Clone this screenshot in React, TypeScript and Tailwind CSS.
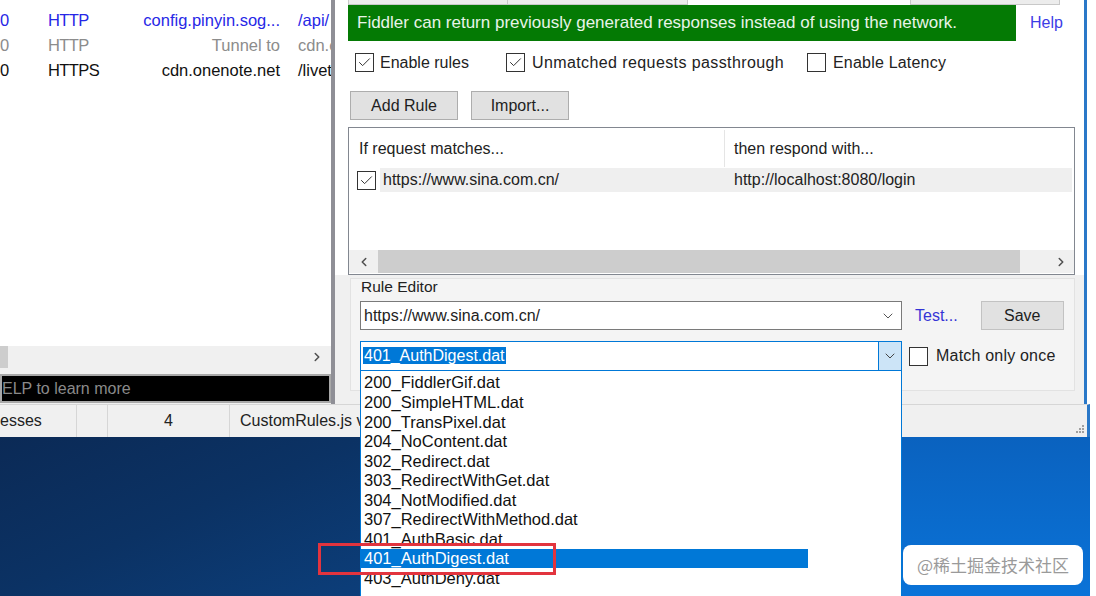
import {Check, ChevronDown, ChevronLeft, ChevronRight} from 'lucide-react';

type Session = {
  tone: string;
  id: string;
  protocol: string;
  host: string;
  url: string;
};

const sessions: Session[] = [
  {tone: 'text-[#2727e6]', id: '0', protocol: 'HTTP', host: 'config.pinyin.sog...', url: '/api/'},
  {tone: 'text-[#8c8c8c]', id: '0', protocol: 'HTTP', host: 'Tunnel to', url: 'cdn.c'},
  {tone: 'text-[#111111]', id: '0', protocol: 'HTTPS', host: 'cdn.onenote.net', url: '/livet'}
];

const responses = [
  '200_FiddlerGif.dat',
  '200_SimpleHTML.dat',
  '200_TransPixel.dat',
  '204_NoContent.dat',
  '302_Redirect.dat',
  '303_RedirectWithGet.dat',
  '304_NotModified.dat',
  '307_RedirectWithMethod.dat',
  '401_AuthBasic.dat',
  '401_AuthDigest.dat',
  '403_AuthDeny.dat'
];

function CheckBox({checked = false}: {checked?: boolean}) {
  return (
    <span className="flex h-[19px] w-[19px] shrink-0 items-center justify-center border border-[#333333] bg-white">
      {checked ? <Check size={15} strokeWidth={1.6} className="text-[#333333]" /> : null}
    </span>
  );
}

function WinButton({label, className}: {label: string; className: string}) {
  return (
    <div
      className={`flex h-[29px] shrink-0 items-center justify-center border border-[#adadad] bg-[#e1e1e1] text-[16px] text-[#1e1e1e] ${className}`}
    >
      {label}
    </div>
  );
}

function SessionPane() {
  return (
    <div className="flex h-full w-[331px] shrink-0 flex-col bg-white">
      <div className="flex-1 overflow-hidden pt-[8px] text-[16.5px]">
        {sessions.map((s) => (
          <div key={s.host} className={`flex h-[25px] items-center whitespace-nowrap ${s.tone}`}>
            <span className="w-[48px] shrink-0">{s.id}</span>
            <span className="w-[62px] shrink-0 tracking-[-0.6px]">{s.protocol}</span>
            <span className="w-[170px] shrink-0 text-right">{s.host}</span>
            <span className="min-w-0 flex-1 overflow-hidden pl-[18px]">{s.url}</span>
          </div>
        ))}
      </div>

      <div className="flex h-[22px] shrink-0 items-center bg-[#f0f0f0]">
        <div className="h-full w-[8px] bg-[#cdcdcd]" />
        <div className="flex-1" />
        <ChevronRight size={14} strokeWidth={2.6} className="mr-[7px] text-[#505050]" />
      </div>
      <div className="h-[6px] shrink-0 bg-[#f0f0f0]" />
      <div className="flex h-[29px] shrink-0 items-center border-2 border-[#a8a8a8] bg-black text-[16px] text-[#8a8a8a]">
        ELP to learn more
      </div>
      <div className="h-[1px] shrink-0 bg-[#f0f0f0]" />
    </div>
  );
}

function StatusBar() {
  return (
    <div className="flex h-[33px] w-[1090px] shrink-0 items-center overflow-hidden border-t border-r-[3px] border-t-[#d6d6d6] border-r-[#2a78c8] bg-[#f0f0f0] text-[16px] text-[#222222]">
      <div className="flex h-full w-[77px] shrink-0 items-center border-r border-[#d6d6d6]">esses</div>
      <div className="h-full w-[31px] shrink-0 border-r border-[#d6d6d6]" />
      <div className="flex h-full w-[122px] shrink-0 items-center justify-center border-r border-[#d6d6d6]">4</div>
      <div className="shrink-0 whitespace-nowrap pl-[10px]">CustomRules.js v</div>
      <div className="flex-1" />
      <svg width="9" height="9" viewBox="0 0 9 9" className="mr-[3px] mt-[14px] shrink-0 text-[#a0a0a0]">
        <rect x="7" y="1" width="2" height="2" fill="currentColor" />
        <rect x="4" y="4" width="2" height="2" fill="currentColor" />
        <rect x="7" y="4" width="2" height="2" fill="currentColor" />
        <rect x="1" y="7" width="2" height="2" fill="currentColor" />
        <rect x="4" y="7" width="2" height="2" fill="currentColor" />
        <rect x="7" y="7" width="2" height="2" fill="currentColor" />
      </svg>
    </div>
  );
}

function RulesList() {
  return (
    <div className="ml-[13px] flex h-[148px] w-[727px] flex-col border border-[#828790] bg-white pt-[2px] text-[16px] text-[#222222]">
      <div className="flex h-[37px] shrink-0">
        <div className="flex w-[376px] items-center border-r border-[#e5e5e5] pl-[10px]">If request matches...</div>
        <div className="flex items-center pl-[9px]">then respond with...</div>
      </div>
      <div className="mt-[1px] flex h-[24px] shrink-0 items-center pl-[8px]">
        <CheckBox checked />
        <div className="ml-[4px] mr-[2px] flex h-full flex-1 items-center bg-[#efefef]">
          <span className="w-[354px] shrink-0 pl-[3px]">https://www.sina.com.cn/</span>
          <span>http://localhost:8080/login</span>
        </div>
      </div>
      <div className="flex-1" />
      <div className="flex h-[23px] shrink-0 items-center bg-[#f0f0f0]">
        <div className="flex w-[29px] justify-center">
          <ChevronLeft size={14} strokeWidth={2.6} className="text-[#505050]" />
        </div>
        <div className="h-full w-[642px] bg-[#cdcdcd]" />
        <div className="flex flex-1 justify-end pr-[6px]">
          <ChevronRight size={14} strokeWidth={2.6} className="text-[#505050]" />
        </div>
      </div>
      <div className="h-[1px] shrink-0 bg-white" />
    </div>
  );
}

function RuleEditor() {
  return (
    <div className="ml-[15px] flex h-[113px] w-[725px] flex-col border border-[#e2e2e2] bg-[#f4f4f4] pl-[9px] text-[16px] text-[#222222]">
      <div className="flex h-[16px] items-center pl-[1px] text-[15.5px]">Rule Editor</div>

      <div className="mt-[6px] flex items-center">
        <div className="flex h-[29px] w-[542px] shrink-0 items-center border border-[#7a7a7a] bg-white pl-[3px]">
          <span className="flex-1">https://www.sina.com.cn/</span>
          <ChevronDown size={16} strokeWidth={1.5} className="mr-[5px] text-[#555555]" />
        </div>
        <span className="ml-[13px] text-[#3434d6]">Test...</span>
        <WinButton label="Save" className="ml-[23px] w-[83px] border-[#c2c2c2]" />
      </div>

      <div className="mt-[11px] flex items-center">
        <div className="flex h-[30px] w-[542px] shrink-0 items-center border border-[#0078d7] bg-white pl-[2px]">
          <span className="flex-1">
            <span className="bg-[#0078d7] px-[1px] text-white">401_AuthDigest.dat</span>
          </span>
          <div className="flex h-full w-[23px] items-center justify-center border-l border-[#0078d7] bg-[#cce4f7]">
            <ChevronDown size={16} strokeWidth={1.5} className="text-[#444444]" />
          </div>
        </div>
        <span className="ml-[7px]">
          <CheckBox />
        </span>
        <span className="ml-[8px] tracking-[0.2px]">Match only once</span>
      </div>
    </div>
  );
}

function AutoResponder() {
  return (
    <div className="flex h-full w-[752px] shrink-0 flex-col border-r-[3px] border-[#2a78c8] bg-white">
      <div className="flex h-[5px] shrink-0">
        <div className="ml-[13px] w-[160px] border-x border-b border-[#c8c8c8] bg-[#ececec]" />
        <div className="w-[180px] border-r border-b border-[#c8c8c8] bg-[#ececec]" />
        <div className="w-[222px]" />
        <div className="w-[150px] border-x border-b border-[#c8c8c8] bg-[#ececec]" />
      </div>

      <div className="flex h-[36px] shrink-0 items-center">
        <div className="ml-[13px] flex h-full w-[668px] shrink-0 items-center whitespace-nowrap bg-[#047a04] pl-[9px] text-[17px] text-[#e8f4e8]">
          Fiddler can return previously generated responses instead of using the network.
        </div>
        <span className="ml-[14px] text-[16px] text-[#3c3ce6]">Help</span>
      </div>

      <div className="mt-[12px] flex h-[19px] shrink-0 items-center text-[16px] text-[#222222]">
        <span className="ml-[20px]">
          <CheckBox checked />
        </span>
        <span className="ml-[6px] w-[126px] shrink-0">Enable rules</span>
        <CheckBox checked />
        <span className="ml-[7px] w-[275px] shrink-0 tracking-[0.4px]">Unmatched requests passthrough</span>
        <CheckBox />
        <span className="ml-[7px] tracking-[0.2px]">Enable Latency</span>
      </div>

      <div className="mt-[19px] flex shrink-0">
        <WinButton label="Add Rule" className="ml-[15px] w-[108px]" />
        <WinButton label="Import..." className="ml-[13px] w-[98px]" />
      </div>

      <div className="mt-[7px] shrink-0">
        <RulesList />
      </div>

      <div className="flex flex-1 flex-col bg-[#f0f0f0] pt-[3px]">
        <RuleEditor />
      </div>
    </div>
  );
}

export default function App() {
  return (
    <div className="relative h-[596px] w-[1096px] overflow-hidden bg-white font-['Liberation_Sans',Arial,sans-serif]">
      <div className="flex h-[404px]">
        <SessionPane />
        <div className="h-full w-[4px] shrink-0 bg-[#8f8f96]" />
        <AutoResponder />
        <div className="flex-1 bg-white" />
      </div>

      <StatusBar />

      <div className="flex h-[159px]">
        <div className="w-[360px] shrink-0 bg-gradient-to-br from-[#0b2a56] via-[#0b3264] to-[#0c3e7a]" />
        <div className="w-[542px] shrink-0 bg-white" />
        <div className="w-[188px] shrink-0 bg-gradient-to-b from-[#0a62bf] to-[#0a73d8]" />
        <div className="flex-1 bg-white" />
      </div>

      {/* open drop-down of the response combo */}
      <div className="absolute left-[360px] top-[371px] h-[225px] w-[542px] border-x border-[#0078d7] bg-white pt-[2px] text-[16.5px] text-[#111111]">
        {responses.map((name) => {
          const selected = name === '401_AuthDigest.dat';
          return (
            <div key={name} className="flex h-[19.55px] items-center">
              <div
                className={`flex h-full items-center pl-[3px] ${
                  selected ? 'w-[447px] bg-[#0078d7] text-white' : ''
                }`}
              >
                {name}
              </div>
            </div>
          );
        })}
      </div>

      {/* annotation box */}
      <div className="absolute left-[318px] top-[543px] h-[32px] w-[238px] border-[3px] border-[#e2343e]" />

      <div className="absolute left-[903px] top-[545px] flex h-[40px] w-[180px] items-center justify-center rounded-[8px] bg-white font-['Noto_Sans_CJK_SC',sans-serif] text-[17px] text-[#9a9a9a]">
        @稀土掘金技术社区
      </div>
    </div>
  );
}
